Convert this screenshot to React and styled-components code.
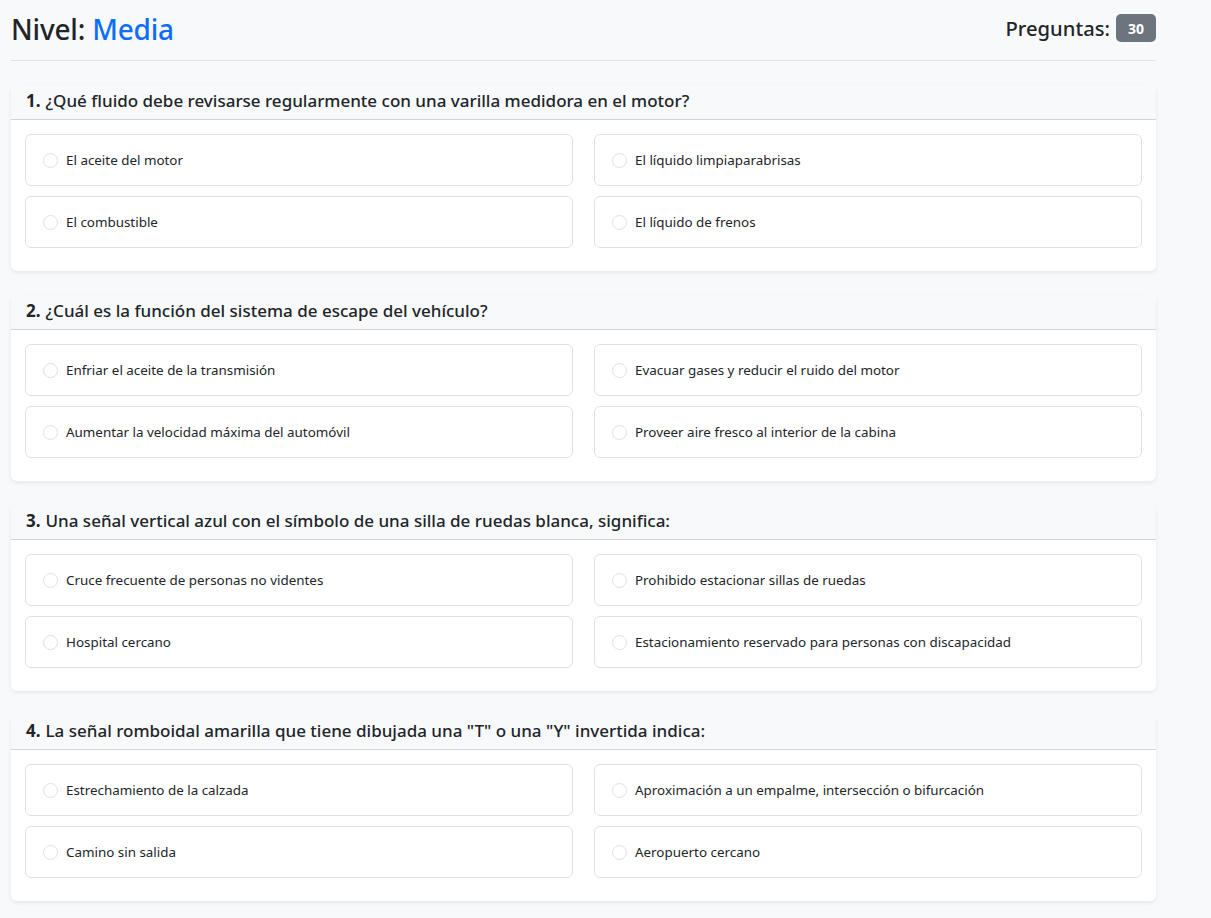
import React from "react";
import styled, { createGlobalStyle } from "styled-components";

const Global = createGlobalStyle`
  * { box-sizing: border-box; }
  html, body { margin: 0; padding: 0; background: #f8f9fa; }
  body { font-family: "Noto Sans", "Open Sans", sans-serif; color: #212529; }
`;

const Page = styled.div`
  width: 1145px;
  margin-left: 11px;
  padding-top: 12px;
  padding-bottom: 16px;
`;

const Header = styled.header`
  display: flex;
  justify-content: space-between;
  align-items: center;
  height: 36px;
`;

const Title = styled.h1`
  margin: 0;
  font-size: 28px;
  font-weight: 500;
  line-height: 1.2;
  letter-spacing: -0.2px;
`;

const Level = styled.span`
  color: #0d6efd;
`;

const Count = styled.div`
  display: flex;
  align-items: center;
  gap: 6px;
  font-size: 20.2px;
  font-weight: 500;
  margin-top: -4px;
`;

const Badge = styled.span`
  display: inline-flex;
  align-items: center;
  justify-content: center;
  background: #6c757d;
  color: #fff;
  font-size: 14px;
  font-weight: 700;
  border-radius: 5px;
  width: 40px;
  height: 28px;
`;

const Rule = styled.hr`
  border: 0;
  border-top: 1px solid #dee2e6;
  margin: 12px 0 24px;
`;

const List = styled.div`
  display: flex;
  flex-direction: column;
  gap: 24px;
`;

const Card = styled.section`
  background: #fff;
  border-radius: 6px;
  box-shadow: 0 2px 4px rgba(0, 0, 0, 0.075);
  overflow: hidden;
`;

const CardHeader = styled.div`
  background: #f8f9fa;
  border-bottom: 1px solid #d3d4d5;
  height: 35px;
  display: flex;
  align-items: center;
  padding: 0 15px 3px;
  font-size: 17px;
  font-weight: 500;
`;

const Num = styled.strong`
  font-weight: 700;
  margin-right: 5px;
`;

const Options = styled.div`
  display: grid;
  grid-template-columns: 1fr 1fr;
  column-gap: 21px;
  row-gap: 10px;
  padding: 14px 14px 23px;
`;

const Option = styled.label`
  display: flex;
  align-items: center;
  height: 52px;
  border: 1px solid #dee2e6;
  border-radius: 6px;
  padding: 0 17px;
  font-size: 13.4px;
  color: #212529;
  cursor: pointer;
`;

const Radio = styled.span`
  width: 15px;
  height: 15px;
  border-radius: 50%;
  border: 1px solid #dee2e6;
  background: #fff;
  margin-right: 8px;
  flex-shrink: 0;
`;

const questions = [
  {
    q: "¿Qué fluido debe revisarse regularmente con una varilla medidora en el motor?",
    o: ["El aceite del motor", "El líquido limpiaparabrisas", "El combustible", "El líquido de frenos"],
  },
  {
    q: "¿Cuál es la función del sistema de escape del vehículo?",
    o: [
      "Enfriar el aceite de la transmisión",
      "Evacuar gases y reducir el ruido del motor",
      "Aumentar la velocidad máxima del automóvil",
      "Proveer aire fresco al interior de la cabina",
    ],
  },
  {
    q: "Una señal vertical azul con el símbolo de una silla de ruedas blanca, significa:",
    o: [
      "Cruce frecuente de personas no videntes",
      "Prohibido estacionar sillas de ruedas",
      "Hospital cercano",
      "Estacionamiento reservado para personas con discapacidad",
    ],
  },
  {
    q: 'La señal romboidal amarilla que tiene dibujada una "T" o una "Y" invertida indica:',
    o: [
      "Estrechamiento de la calzada",
      "Aproximación a un empalme, intersección o bifurcación",
      "Camino sin salida",
      "Aeropuerto cercano",
    ],
  },
];

export default function App() {
  return (
    <>
      <Global />
      <Page>
        <Header>
          <Title>
            Nivel: <Level>Media</Level>
          </Title>
          <Count>
            Preguntas: <Badge>30</Badge>
          </Count>
        </Header>
        <Rule />
        <List>
          {questions.map((item, i) => (
            <Card key={i}>
              <CardHeader>
                <Num>{i + 1}.</Num>
                {item.q}
              </CardHeader>
              <Options>
                {item.o.map((opt) => (
                  <Option key={opt}>
                    <Radio />
                    {opt}
                  </Option>
                ))}
              </Options>
            </Card>
          ))}
        </List>
      </Page>
    </>
  );
}
